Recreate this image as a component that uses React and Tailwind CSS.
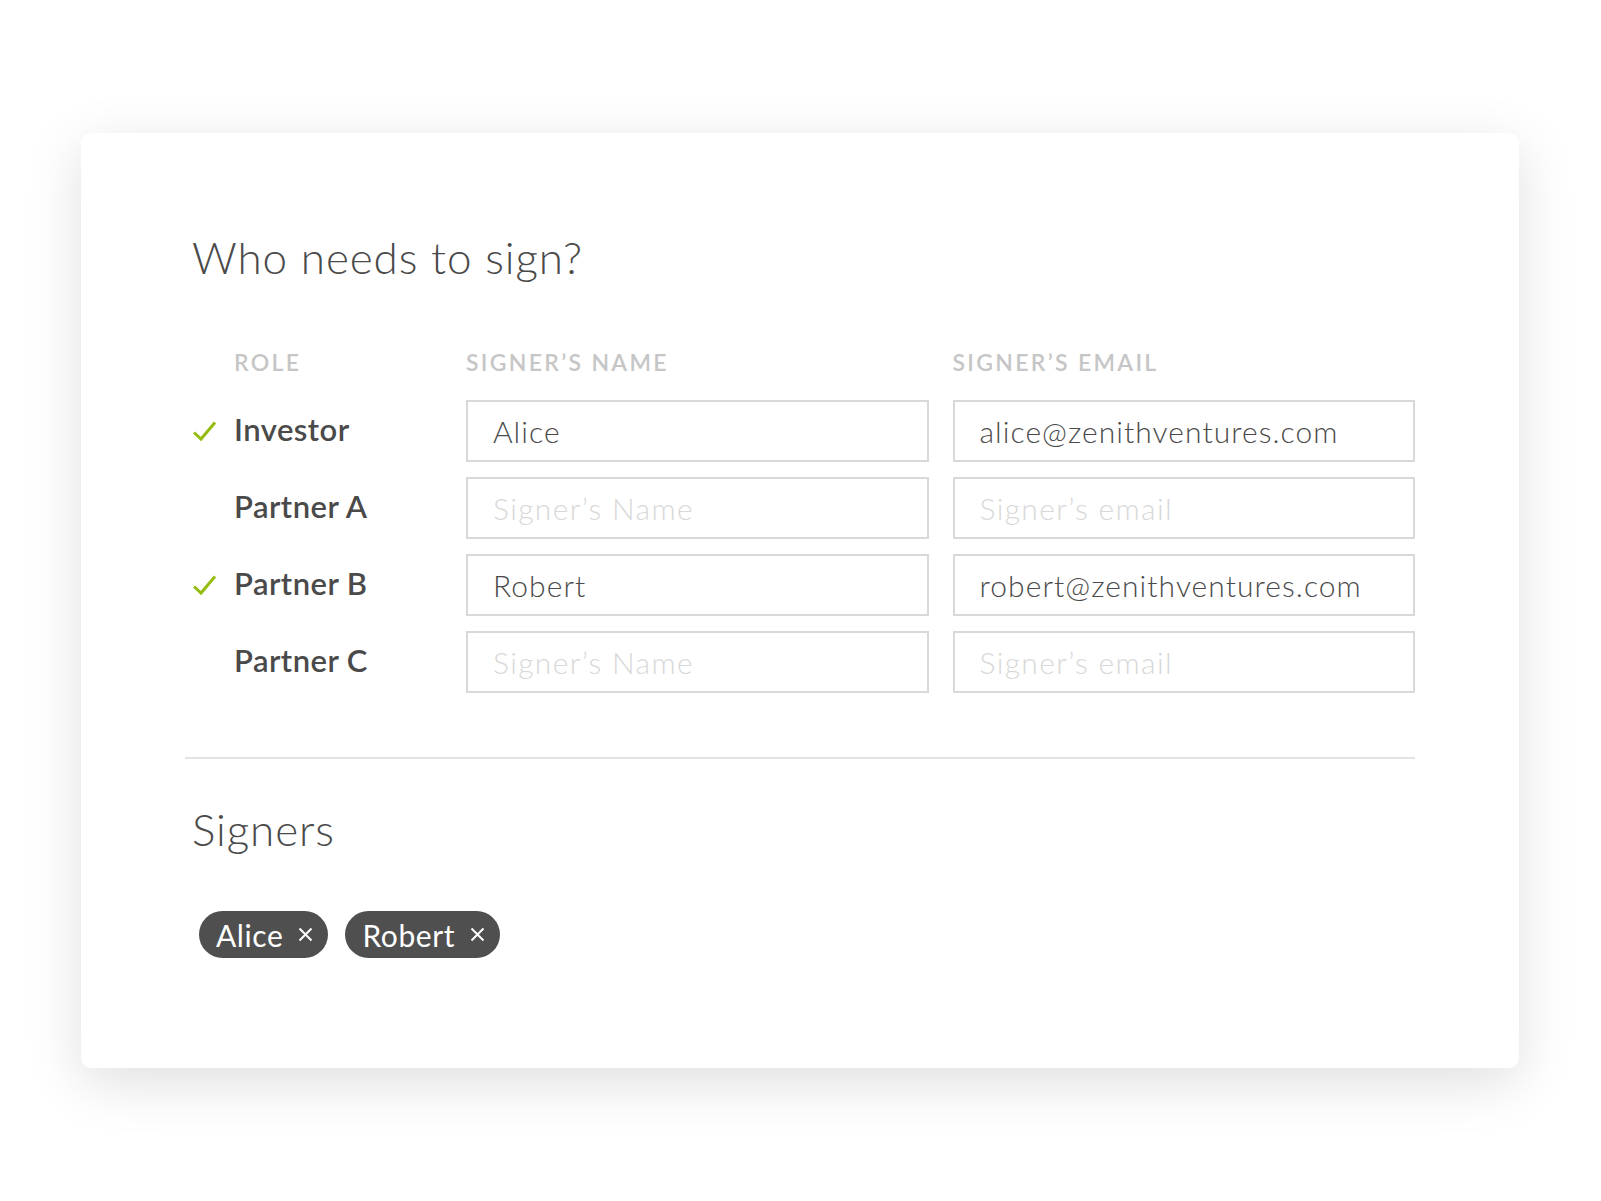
import React from 'react';

const rows = [
  { role: 'Investor', name: 'Alice', email: 'alice@zenithventures.com', checked: true },
  { role: 'Partner A', name: '', email: '', checked: false },
  { role: 'Partner B', name: 'Robert', email: 'robert@zenithventures.com', checked: true },
  { role: 'Partner C', name: '', email: '', checked: false },
];

const Check = () => (
  <svg width="26" height="22" viewBox="0 0 26 22" fill="none">
    <path d="M2 12.5 L9 19 L23 2.5" stroke="#94bd0f" strokeWidth="3" strokeLinecap="butt" strokeLinejoin="miter" />
  </svg>
);

const Cross = () => (
  <svg width="15" height="15" viewBox="0 0 15 15" fill="none">
    <path d="M1.5 1.5 L13.5 13.5 M13.5 1.5 L1.5 13.5" stroke="#ffffff" strokeWidth="2" />
  </svg>
);

const Field = ({ value, placeholder }) => (
  <div className="h-[62px] border-2 border-[#d9d9d9] bg-white flex items-center pl-[25px]">
    {value ? (
      <span className="text-[30px] font-light text-[#4a4a4a] tracking-[0.035em]">{value}</span>
    ) : (
      <span className="text-[30px] font-light text-[#d8d8d8] tracking-[0.045em]">{placeholder}</span>
    )}
  </div>
);

const Chip = ({ label }) => (
  <div className="h-[47px] rounded-full bg-[#4f4f4f] text-white flex items-center gap-[15px] pl-[17px] pr-[15px]">
    <span className="text-[30px] leading-none tracking-[0.02em]">{label}</span>
    <Cross />
  </div>
);

export default function App() {
  return (
    <div className="min-h-[1201px] bg-white pt-[133px] pl-[81px]" style={{ fontFamily: 'Lato, "Open Sans", sans-serif' }}>
      <div className="w-[1438px] h-[935px] bg-white rounded-[10px] shadow-[0_14px_55px_rgba(0,0,0,0.13)] pt-[102px] px-[104px]">
        <h1 className="pl-[7px] text-[44px] leading-none font-light tracking-[0.02em] text-[#4a4a4a]">Who needs to sign?</h1>

        <div className="mt-[72px] grid grid-cols-[257px_1fr_1fr] gap-x-[24px]">
          <div className="pl-[49px] text-[23px] leading-none font-semibold tracking-[0.1em] text-[#c6c6c6]">ROLE</div>
          <div className="text-[23px] leading-none font-semibold tracking-[0.1em] text-[#c6c6c6]">SIGNER’S NAME</div>
          <div className="text-[23px] leading-none font-semibold tracking-[0.1em] text-[#c6c6c6]">SIGNER’S EMAIL</div>
        </div>

        <div className="mt-[26px] flex flex-col gap-[15px]">
          {rows.map((r) => (
            <div key={r.role} className="grid grid-cols-[257px_1fr_1fr] gap-x-[24px]">
              <div className="flex items-center pl-[7px]">
                <div className="w-[42px] flex items-center">{r.checked && <Check />}</div>
                <span className="text-[31px] font-semibold tracking-[0.015em] text-[#4a4a4a] -mt-[3px]">{r.role}</span>
              </div>
              <Field value={r.name} placeholder="Signer’s Name" />
              <Field value={r.email} placeholder="Signer’s email" />
            </div>
          ))}
        </div>

        <div className="mt-[64px] border-t-2 border-[#e3e3e3]" />

        <h2 className="mt-[48px] pl-[7px] text-[44px] leading-none font-light tracking-[0.02em] text-[#4a4a4a]">Signers</h2>

        <div className="mt-[60px] pl-[14px] flex gap-[17px]">
          <Chip label="Alice" />
          <Chip label="Robert" />
        </div>
      </div>
    </div>
  );
}
